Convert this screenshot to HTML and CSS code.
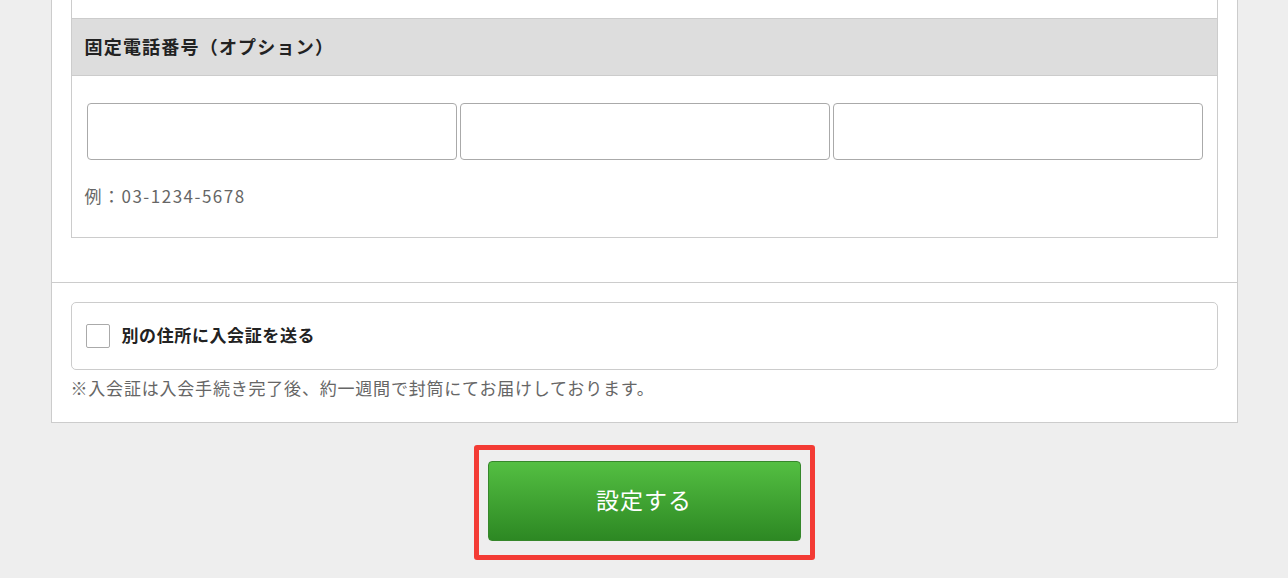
FILE: index.html
```html
<!DOCTYPE html>
<html lang="ja">

<head>
    <meta charset="UTF-8">
    <meta name="viewport" content="width=device-width, initial-scale=1.0">
    <title>会員情報の設定</title>
    <link rel="stylesheet" href="styles.css">
</head>

<body>
    <div class="panel">
        <div class="panel-main">
            <div class="field-box">
                <div class="field-prev"></div>
                <div class="field-head">固定電話番号（オプション）</div>
                <div class="field-body">
                    <div class="tel-inputs">
                        <input type="text" class="tel-input">
                        <input type="text" class="tel-input">
                        <input type="text" class="tel-input">
                    </div>
                    <p class="field-example">例：03-1234-5678</p>
                </div>
            </div>
        </div>

        <div class="panel-sub">
            <label class="check-box">
                <span class="check-mark"></span>
                <span class="check-label">別の住所に入会証を送る</span>
            </label>
            <p class="note">※入会証は入会手続き完了後、約一週間で封筒にてお届けしております。</p>
        </div>
    </div>

    <div class="submit-area">
        <div class="submit-frame">
            <button type="button" class="submit-btn">設定する</button>
        </div>
    </div>
</body>

</html>
```

FILE: styles.css
```css
body {
    margin: 0;
    background-color: #eee;
    font-family: "Noto Sans CJK JP", "Noto Sans", sans-serif;
    color: #333;
}

p {
    margin: 0;
}

.panel {
    width: 1187px;
    margin: 0 auto;
    box-sizing: border-box;
    background-color: #fff;
    border: 1px solid #ccc;
    border-top: none;
}

.panel-main {
    padding: 0 19px 44px;
    border-bottom: 1px solid #ccc;
}

.field-box {
    border: 1px solid #ccc;
    border-top: none;
}

.field-prev {
    height: 18px;
}

.field-head {
    display: flex;
    align-items: center;
    height: 58px;
    padding: 0 0 3px 13px;
    box-sizing: border-box;
    font-size: 18px;
    font-weight: bold;
    letter-spacing: 1.2px;
    color: #222;
    background-color: #ddd;
    border-top: 1px solid #ccc;
    border-bottom: 1px solid #ccc;
}

.field-body {
    padding: 27px 14px 29px 13px;
}

.tel-inputs {
    display: grid;
    grid-template-columns: repeat(3, 1fr);
    gap: 3px;
    margin-left: 2px;
}

.tel-input {
    height: 57px;
    margin: 0;
    box-sizing: border-box;
    background-color: #fff;
    border: 1px solid #aaa;
    border-radius: 4px;
}

.field-example {
    margin-top: 24px;
    font-size: 17px;
    line-height: 24px;
    letter-spacing: 1.5px;
    color: #666;
}

.panel-sub {
    padding: 19px 19px 22px;
}

.check-box {
    display: flex;
    align-items: center;
    gap: 12px;
    height: 66px;
    padding-left: 14px;
    border: 1px solid #ccc;
    border-radius: 5px;
}

.check-mark {
    width: 24px;
    height: 24px;
    box-sizing: border-box;
    border: 1px solid #aaa;
    border-radius: 2px;
}

.check-label {
    padding-bottom: 3px;
    font-size: 17px;
    font-weight: bold;
    letter-spacing: 0.6px;
    color: #222;
}

.note {
    margin-top: 6px;
    font-size: 17px;
    line-height: 24px;
    letter-spacing: 0.8px;
    color: #666;
}

.submit-area {
    display: flex;
    justify-content: center;
    margin-top: 22px;
}

.submit-frame {
    padding: 11px 9px 14px;
    border: 5px solid #f33b34;
    border-radius: 3px;
}

.submit-btn {
    display: block;
    width: 313px;
    height: 80px;
    padding: 0 0 5px;
    font-family: inherit;
    font-size: 23px;
    letter-spacing: 1px;
    color: #fff;
    cursor: pointer;
    background: linear-gradient(#54bf42, #2d8823);
    border: 1px solid #36872b;
    border-radius: 4px;
}
```
